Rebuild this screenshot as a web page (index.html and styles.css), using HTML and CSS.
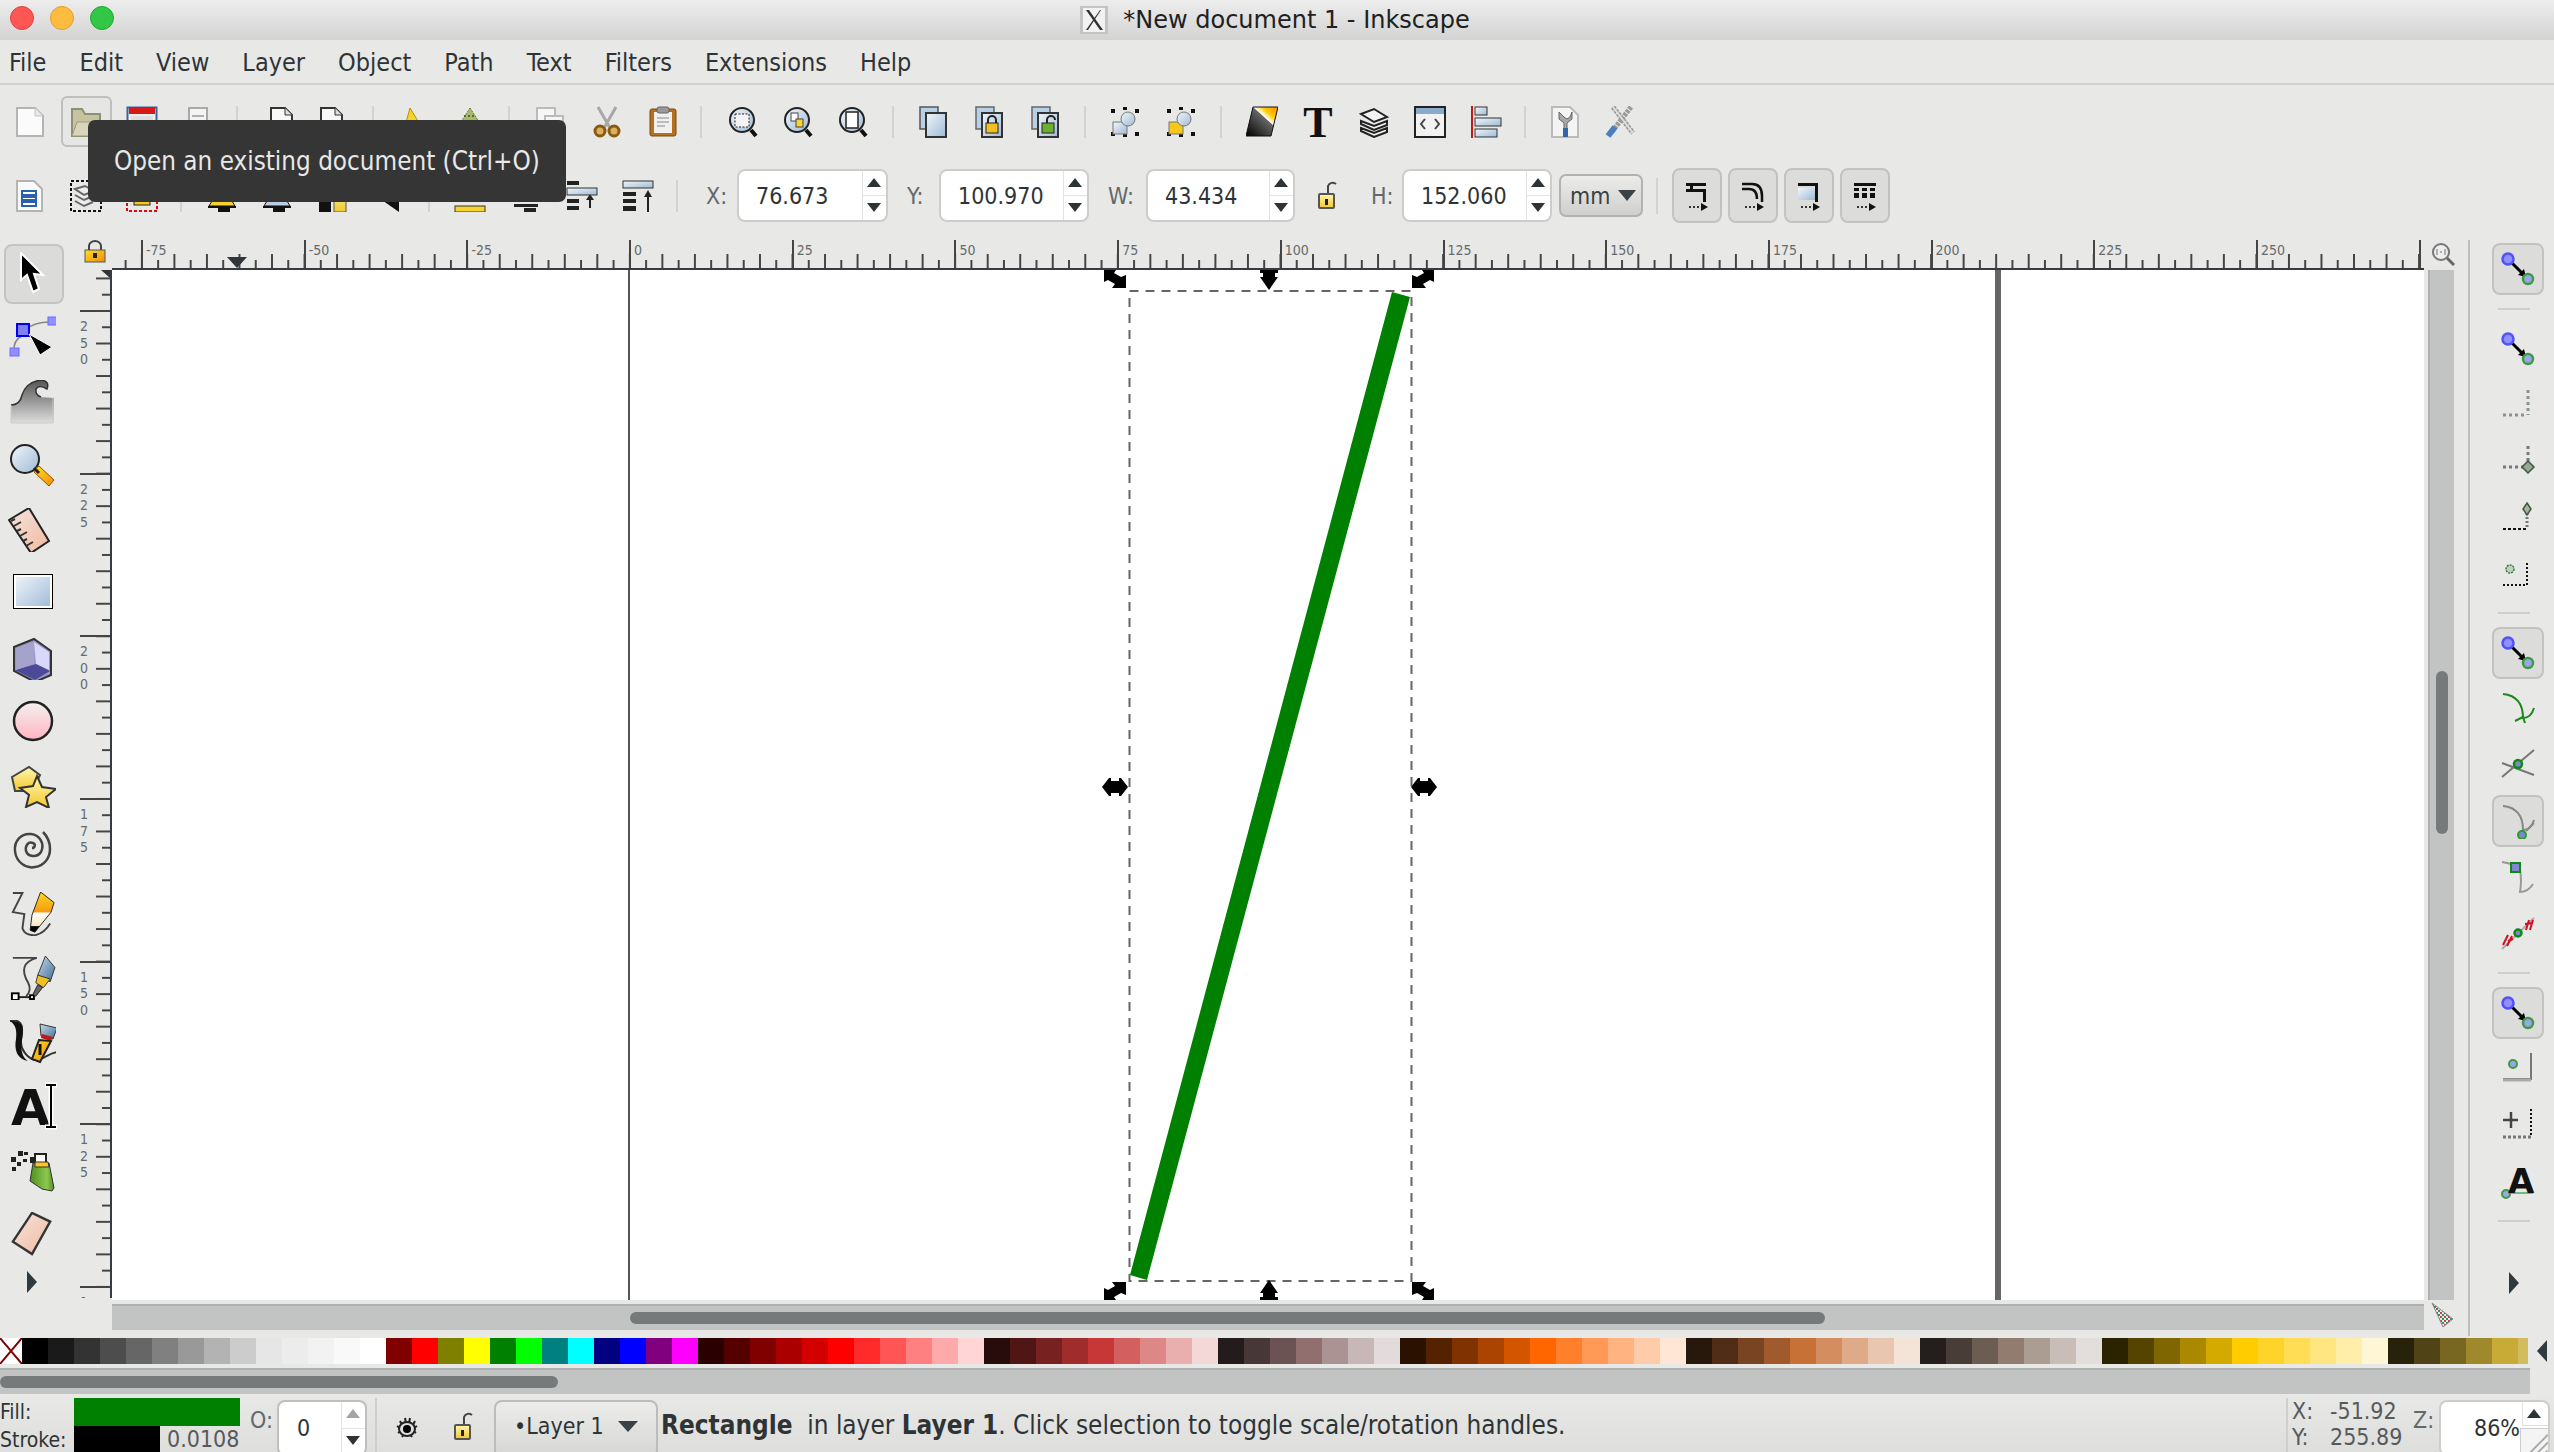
FILE: index.html
```html
<!DOCTYPE html>
<html lang="en">
<head>
<meta charset="utf-8">
<title>*New document 1 - Inkscape</title>
<link rel="stylesheet" href="styles.css">
</head>
<body>
<svg class="defs" aria-hidden="true">
<defs>
<linearGradient id="gBlue" x1="0" y1="0" x2="1" y2="1"><stop offset="0" stop-color="#f2f6fa"/><stop offset="1" stop-color="#9dbad6"/></linearGradient>
<linearGradient id="gPink" x1="0" y1="0" x2="0" y2="1"><stop offset="0" stop-color="#f4f0f0"/><stop offset="1" stop-color="#ffb4c0"/></linearGradient>
<linearGradient id="gPeach" x1="0" y1="0" x2="1" y2="1"><stop offset="0" stop-color="#f4e4dc"/><stop offset="1" stop-color="#f2b9a0"/></linearGradient>
<linearGradient id="gYel" x1="0" y1="0" x2="0" y2="1"><stop offset="0" stop-color="#fff8b0"/><stop offset="1" stop-color="#f3c72c"/></linearGradient>
<linearGradient id="gOrg" x1="0" y1="0" x2="1" y2="1"><stop offset="0" stop-color="#ffe020"/><stop offset="1" stop-color="#f08a10"/></linearGradient>
<linearGradient id="gPencil" x1="0" y1="0" x2="0" y2="1"><stop offset="0" stop-color="#ffd820"/><stop offset=".5" stop-color="#f59a10"/><stop offset=".52" stop-color="#fff"/><stop offset=".85" stop-color="#f8e8c0"/><stop offset=".86" stop-color="#000"/></linearGradient>
<linearGradient id="gGray" x1="0" y1="0" x2="0" y2="1"><stop offset="0" stop-color="#555"/><stop offset="1" stop-color="#ddd"/></linearGradient>
<linearGradient id="gGreen" x1="0" y1="0" x2="1" y2="0"><stop offset="0" stop-color="#4c8f1c"/><stop offset=".7" stop-color="#8cc850"/><stop offset="1" stop-color="#4c8f1c"/></linearGradient>
<linearGradient id="gSteel" x1="0" y1="0" x2="1" y2="1"><stop offset="0" stop-color="#c8dce8"/><stop offset="1" stop-color="#3c6c98"/></linearGradient>
<linearGradient id="gFS" x1="0" y1="1" x2="1" y2="0"><stop offset="0" stop-color="#000"/><stop offset=".6" stop-color="#666"/><stop offset=".62" stop-color="#fff"/><stop offset=".75" stop-color="#fc0"/><stop offset="1" stop-color="#f80"/></linearGradient>
<symbol id="i-new" viewBox="0 0 32 32"><path d="M3 2h18l8 8v20H3z" fill="#fbfbfb" stroke="#b4b4b4" stroke-width="2"/><path d="M21 2v8h8" fill="#e8e8e8" stroke="#c4c4c4"/></symbol>
<symbol id="i-open" viewBox="0 0 32 32"><path d="M2 3h10l3 5h15v22H2z" fill="#c6c3a0" stroke="#8f8f78" stroke-width="2"/><path d="M2 30l5-14h24l-3 14z" fill="#d8d5b8" stroke="#9a9a80"/></symbol>
<symbol id="i-save" viewBox="0 0 32 32"><rect x="1.500" y="1.500" width="29" height="29" fill="#eee" stroke="#3465a4" stroke-width="2"/><rect x="3" y="1" width="26" height="7" fill="#d81818"/><rect x="5" y="10" width="22" height="6" fill="#ddd"/></symbol>
<symbol id="i-saveas" viewBox="0 0 32 32"><rect x="7" y="2" width="18" height="26" fill="#f4f4f4" stroke="#a8a8a8" stroke-width="2"/><path d="M10 10h12M10 15h12M10 20h12" stroke="#b0b0b0" stroke-width="2"/></symbol>
<symbol id="i-imp" viewBox="0 0 32 32"><path d="M6 2h14l7 7v21H6z" fill="#f8f8f8" stroke="#333" stroke-width="2"/><path d="M20 2v7h7" fill="#ddd" stroke="#333"/></symbol>
<symbol id="i-undo" viewBox="0 0 32 32"><path d="M14 2l11 18h-5v8H4v-8h5z" fill="#f6d32d" stroke="#b89000"/></symbol>
<symbol id="i-redo" viewBox="0 0 32 32"><path d="M16 2l13 20H3z" fill="#a8b870" stroke="#6e8030" stroke-dasharray="2 1"/><path d="M6 16h20M10 10h12" stroke="#587020" stroke-dasharray="2 2" stroke-width="2"/></symbol>
<symbol id="i-copy" viewBox="0 0 32 32"><rect x="2" y="2" width="18" height="22" fill="#f6f6f6" stroke="#bbb" stroke-width="2"/><rect x="10" y="10" width="18" height="20" fill="#f4f4f4" stroke="#bbb" stroke-width="2"/></symbol>
<symbol id="i-cut" viewBox="0 0 32 32"><path d="M7 1l12 21M25 1L13 22" stroke="#a8a8a8" stroke-width="3"/><circle cx="9" cy="25" r="5" fill="#d8b060" stroke="#8a5a10" stroke-width="3"/><circle cx="23" cy="25" r="5" fill="#d8b060" stroke="#8a5a10" stroke-width="3"/></symbol>
<symbol id="i-paste" viewBox="0 0 32 32"><rect x="3" y="3" width="26" height="27" rx="2" fill="#b4701c" stroke="#7a4a10"/><rect x="7" y="6" width="18" height="21" fill="#f0f0f0"/><rect x="10" y="1" width="12" height="6" rx="2" fill="#999" stroke="#666"/><path d="M10 12h12M10 16h12M10 20h8" stroke="#aaa" stroke-width="1.500"/></symbol>
<symbol id="i-z1" viewBox="0 0 32 32"><circle cx="15" cy="14" r="12" fill="url(#gBlue)" stroke="#222" stroke-width="2"/><rect x="8" y="8" width="14" height="13" fill="#f4f4f4" stroke="#222" stroke-dasharray="2 1.500"/><path d="M24 24l5 6" stroke="#111" stroke-width="4"/></symbol>
<symbol id="i-z2" viewBox="0 0 32 32"><circle cx="15" cy="14" r="12" fill="url(#gBlue)" stroke="#222" stroke-width="2"/><rect x="9" y="7" width="7" height="8" fill="#fff" stroke="#444"/><rect x="14" y="13" width="7" height="8" fill="#f6d32d" stroke="#444"/><path d="M24 24l5 6" stroke="#111" stroke-width="4"/></symbol>
<symbol id="i-z3" viewBox="0 0 32 32"><circle cx="15" cy="14" r="12" fill="url(#gBlue)" stroke="#222" stroke-width="2"/><rect x="9" y="6" width="12" height="16" fill="#fff" stroke="#222" stroke-width="1.500"/><path d="M24 24l5 6" stroke="#111" stroke-width="4"/></symbol>
<symbol id="i-dup" viewBox="0 0 32 32"><rect x="2" y="1" width="18" height="22" fill="#b8d0e6" stroke="#555" stroke-width="1.500"/><rect x="8" y="7" width="20" height="24" fill="url(#gBlue)" stroke="#333" stroke-width="2"/></symbol>
<symbol id="i-clone" viewBox="0 0 32 32"><rect x="2" y="1" width="18" height="22" fill="#b8d0e6" stroke="#666" stroke-width="1.500"/><rect x="8" y="7" width="20" height="24" fill="url(#gBlue)" stroke="#333" stroke-width="2"/><path d="M14 17v-3a4 4 0 018 0v3" fill="none" stroke="#222" stroke-width="2"/><rect x="12" y="17" width="12" height="10" fill="#f4c020" stroke="#222"/></symbol>
<symbol id="i-unclone" viewBox="0 0 32 32"><rect x="2" y="1" width="18" height="22" fill="#b8d0e6" stroke="#666" stroke-width="1.500"/><rect x="8" y="7" width="20" height="24" fill="url(#gBlue)" stroke="#333" stroke-width="2"/><path d="M17 17v-3a4 4 0 018 0" fill="none" stroke="#222" stroke-width="2"/><rect x="12" y="17" width="12" height="10" fill="#6cb030" stroke="#222"/></symbol>
<symbol id="i-grp" viewBox="0 0 32 32"><path d="M2 3h4v4H2zM26 3h4v4h-4zM2 26h4v4H2zM26 26h4v4h-4zM14 1h4v3h-4zM14 28h4v3h-4z" fill="#111"/><rect x="4" y="16" width="14" height="12" fill="url(#gBlue)" stroke="#777"/><circle cx="19" cy="13" r="7" fill="url(#gBlue)" stroke="#777"/></symbol>
<symbol id="i-ungrp" viewBox="0 0 32 32"><path d="M2 3h4v4H2zM26 3h4v4h-4zM2 26h4v4H2zM26 26h4v4h-4zM14 1h4v3h-4zM14 28h4v3h-4z" fill="#111"/><rect x="4" y="16" width="14" height="12" fill="#f6c81c" stroke="#777"/><circle cx="19" cy="13" r="7" fill="url(#gBlue)" stroke="#777"/></symbol>
<symbol id="i-fs" viewBox="0 0 32 32"><path d="M7 1h25L25 30H0z" fill="url(#gFS)" stroke="#111" stroke-width="1"/></symbol>
<symbol id="i-layers" viewBox="0 0 32 32"><g fill="#f4f4f4" stroke="#222" stroke-width="2"><path d="M3 8l13-5 13 8-13 5z"/><path d="M3 15l0 3 13 6 13-5v-4l-13 5z"/><path d="M3 22v3l13 6 13-5v-4l-13 5z"/></g></symbol>
<symbol id="i-xml" viewBox="0 0 32 32"><rect x="1" y="1" width="30" height="30" fill="#f2f2f2" stroke="#222" stroke-width="2"/><rect x="2" y="2" width="28" height="6" fill="#8aaccc"/><path d="M11 13l-4 5 4 5M21 13l4 5-4 5" fill="none" stroke="#444" stroke-width="2"/></symbol>
<symbol id="i-align" viewBox="0 0 32 32"><path d="M2 0v32" stroke="#c01818" stroke-width="2"/><rect x="5" y="1" width="12" height="8" fill="url(#gBlue)" stroke="#333"/><rect x="5" y="12" width="26" height="8" fill="url(#gBlue)" stroke="#333"/><rect x="5" y="23" width="22" height="8" fill="url(#gBlue)" stroke="#333"/></symbol>
<symbol id="i-pref" viewBox="0 0 32 32"><path d="M3 1h18l8 8v22H3z" fill="#f4f4f4" stroke="#bbb" stroke-width="2"/><path d="M10 6v7l5 4v10h3V17l5-4V6l-2 5-3 2-3-2z" fill="#a8a8a8" stroke="#666"/><rect x="14" y="22" width="5" height="9" fill="#3465a4"/></symbol>
<symbol id="i-tools" viewBox="0 0 32 32"><path d="M8 1l20 26M26 1L6 27" stroke="#999" stroke-width="5" stroke-dasharray="3 1"/><path d="M3 30l7-9" stroke="#4a80c0" stroke-width="6"/><path d="M8 1l20 26" stroke="#ddd" stroke-width="2"/></symbol>
<symbol id="i-seldoc" viewBox="0 0 32 32"><path d="M3 1h17l8 8v22H3z" fill="#fbfbfb" stroke="#b4b4b4" stroke-width="2"/><path d="M8 11h14v4H8zM8 17h14v3H8zM8 22h14v4H8z" fill="#fff" stroke="#2a60b0" stroke-width="2"/></symbol>
<symbol id="i-sellay" viewBox="0 0 32 32"><rect x="1" y="1" width="30" height="30" fill="none" stroke="#111" stroke-width="2" stroke-dasharray="3 2"/><path d="M5 9l10-3 9 5-10 4zM5 15l9 5 9-4M5 21l9 5 9-4" fill="#eee" stroke="#666" stroke-width="2"/></symbol>
<symbol id="i-selred" viewBox="0 0 32 32"><rect x="1" y="1" width="30" height="30" fill="none" stroke="#d01010" stroke-width="2" stroke-dasharray="3 2"/><rect x="8" y="7" width="16" height="18" fill="#f6c81c" stroke="#222"/></symbol>
<symbol id="i-rot" viewBox="0 0 32 32"><path d="M2 26h28v2H2z" fill="#111"/><path d="M16 4l13 22H3z" fill="#f6d32d" stroke="#111"/><rect x="12" y="26" width="12" height="6" fill="#111"/></symbol>
<symbol id="i-rot2" viewBox="0 0 32 32"><path d="M2 26h28v2H2z" fill="#111"/><path d="M16 4l13 22H3z" fill="#b8d0e6" stroke="#111"/><rect x="12" y="26" width="12" height="6" fill="#111"/></symbol>
<symbol id="i-flip" viewBox="0 0 32 32"><rect x="3" y="6" width="12" height="26" fill="#111"/><rect x="18" y="6" width="12" height="26" fill="url(#gYel)" stroke="#555"/></symbol>
<symbol id="i-flip2" viewBox="0 0 32 32"><path d="M8 18l20 0v14z" fill="#111"/></symbol>
<symbol id="i-z-bot" viewBox="0 0 32 32"><rect x="1" y="26" width="30" height="6" fill="#f6d32d" stroke="#333"/></symbol>
<symbol id="i-z-low" viewBox="0 0 32 32"><path d="M4 24h24v3H4zM14 28h12v4H14z" fill="#222"/></symbol>
<symbol id="i-z-up" viewBox="0 0 32 32"><g fill="#222"><rect x="1" y="1" width="12" height="4"/><rect x="1" y="19" width="12" height="4"/><rect x="1" y="26" width="12" height="4"/><path d="M24 14l4 6h-3v8h-2v-8h-3z"/></g><rect x="1" y="8" width="30" height="7" fill="url(#gBlue)" stroke="#333"/></symbol>
<symbol id="i-z-top" viewBox="0 0 32 32"><rect x="1" y="1" width="30" height="7" fill="url(#gBlue)" stroke="#333"/><g fill="#222"><rect x="1" y="12" width="13" height="4"/><rect x="1" y="19" width="13" height="4"/><rect x="1" y="26" width="13" height="5"/><path d="M26 10l4 7h-3v15h-2V17h-3z"/></g></symbol>
<symbol id="i-lock" viewBox="0 0 22 32"><path d="M12 14V6a5 5 0 0 1 8-2" fill="none" stroke="#444" stroke-width="2"/><rect x="3" y="14" width="15" height="14" rx="1" fill="url(#gYel)" stroke="#555" stroke-width="2"/><rect x="9" y="19" width="3" height="6" fill="#222"/></symbol>
<symbol id="i-lockc" viewBox="0 0 22 24"><path d="M5 11V6a6 5 0 0 1 12 0v5" fill="none" stroke="#444" stroke-width="2"/><rect x="1" y="10" width="20" height="12" fill="url(#gOrg)" stroke="#555"/><rect x="9" y="13" width="4" height="5" fill="#222"/></symbol>
<symbol id="m-a" viewBox="0 0 24 32"><path d="M1 3h20v3H8v3h13v13h-3V12H1V9h4V6H1z" fill="#111"/><path d="M4 27h12" stroke="#333" stroke-width="2" stroke-dasharray="2 2"/><path d="M16 23l7 4-7 4z" fill="#111"/></symbol>
<symbol id="m-b" viewBox="0 0 24 32"><path d="M1 4h10q10 0 10 12v6M1 9h7q8 0 8 10" fill="none" stroke="#111" stroke-width="2.500"/><path d="M4 27h12" stroke="#333" stroke-width="2" stroke-dasharray="2 2"/><path d="M16 23l7 4-7 4z" fill="#111"/></symbol>
<symbol id="m-c" viewBox="0 0 24 32"><rect x="1" y="8" width="17" height="12" fill="url(#gBlue)"/><path d="M1 3h20v3H1zM18 6h3v16h-3z" fill="#111"/><path d="M4 27h12" stroke="#333" stroke-width="2" stroke-dasharray="2 2"/><path d="M16 23l7 4-7 4z" fill="#111"/></symbol>
<symbol id="m-d" viewBox="0 0 24 32"><path d="M1 3h22v3H1zM1 8h5v3H1zM9 8h5v3H9zM17 8h5v3h-5zM1 13h5v5H1zM9 13h5v5H9zM17 13h5v5h-5z" fill="#111"/><path d="M4 27h12" stroke="#333" stroke-width="2" stroke-dasharray="2 2"/><path d="M16 23l7 4-7 4z" fill="#111"/></symbol>
<symbol id="t-sel" viewBox="0 0 48 44"><path d="M13 1v27l6-5 6 17 6-3-5-15 9 1z" fill="#000" stroke="#fff" stroke-width="2"/></symbol>
<symbol id="t-node" viewBox="0 0 48 44"><path d="M16 14Q28 5 45 6M14 20Q5 24 6 36" fill="none" stroke="#888" stroke-width="1.500"/><rect x="9" y="8" width="12" height="12" fill="#8080f0" stroke="#0000f0" stroke-width="2"/><rect x="40" y="1" width="9" height="8" fill="#9090ff" stroke="#6a6aff"/><rect x="2" y="32" width="9" height="8" fill="#9090ff" stroke="#6a6aff"/><path d="M21 18l23 13-12 8z" fill="#000" stroke="#fff"/></symbol>
<symbol id="t-tweak" viewBox="0 0 48 44"><path d="M3 25q9 0 11-10 4-13 19-15 9 1 6 9-6-5-10-1-3 6 2 9l15 1V43H3z" fill="url(#gGray)"/><path d="M3 25q9 0 11-10 4-13 19-15 9 1 6 9-8-5-11 0-1 6 5 8" fill="none" stroke="#333" stroke-width="1.500"/><path d="M3 25V43H45V18" fill="none" stroke="#ccc"/></symbol>
<symbol id="t-zoom" viewBox="0 0 48 44"><circle cx="17" cy="15" r="14" fill="url(#gBlue)" stroke="#222" stroke-width="2"/><path d="M27 25l4-3 15 14-5 6-15-14z" fill="url(#gOrg)" stroke="#a04c00" stroke-width="1"/><path d="M26 24l5 5" stroke="#222" stroke-width="3"/></symbol>
<symbol id="t-meas" viewBox="0 0 48 44"><path d="M1 12L21 0l20 33-18 12z" fill="url(#gPeach)" stroke="#222" stroke-width="2"/><path d="M3 13l4-2M6 18l7-4M9 23l4-2M12 28l7-4M15 33l4-2M18 38l7-4" stroke="#333" stroke-width="2"/></symbol>
<symbol id="t-rect" viewBox="0 0 48 44"><rect x="6" y="3" width="38" height="33" fill="url(#gBlue)" stroke="#000" stroke-width="2"/><rect x="7" y="4" width="36" height="31" fill="none" stroke="#fff" stroke-width="2"/></symbol>
<symbol id="t-box" viewBox="0 0 48 44"><path d="M6 11L26 3l17 12v24l-16 7-21-11z" fill="#9a98c8" stroke="#333" stroke-width="2"/><path d="M26 6l15 10v18l-13-6z" fill="#d8d8fa"/><path d="M7 34l21-6 14 7-15 9z" fill="#4a4a98"/><path d="M8 12l18-6v22L8 34z" fill="#a5a3cc"/></symbol>
<symbol id="t-circ" viewBox="0 0 48 44"><ellipse cx="25" cy="21" rx="19" ry="19" fill="url(#gPink)" stroke="#222" stroke-width="2.500"/></symbol>
<symbol id="t-star" viewBox="0 0 48 44"><path d="M4 13L21 3l11 8-8 16H7z" fill="url(#gYel)" stroke="#444" stroke-width="2"/><path d="M29 12l5 11 14 2-10 8 3 11-12-6-11 5 3-12-9-7 13-2z" fill="url(#gYel)" stroke="#333" stroke-width="2"/></symbol>
<symbol id="t-spiral" viewBox="0 0 48 44"><path d="M24 20c3 0 4-4 1-5-5-2-8 3-7 8 2 6 11 7 15 1 4-8-1-17-10-18C13 5 6 13 7 23c1 11 11 18 20 16 9-1 15-9 15-18 0-7-3-13-7-17" fill="none" stroke="#444" stroke-width="2.500"/></symbol>
<symbol id="t-pencil" viewBox="0 0 48 46"><path d="M4 1h10L4 21l12 2-2 15q3 8 14 7 9-2 15-12" fill="none" stroke="#444" stroke-width="2"/><path d="M33 0l14 11-3 10-17 21-5-2 2-16z" fill="url(#gPencil)" stroke="#222"/></symbol>
<symbol id="t-pen" viewBox="0 0 48 46"><path d="M4 2h25Q8 8 20 28q4 8-2 14" fill="none" stroke="#444" stroke-width="2"/><path d="M9 43h14" stroke="#222" stroke-width="2"/><rect x="3" y="39" width="7" height="7" fill="#fff" stroke="#000" stroke-width="2"/><rect x="22" y="41" width="4" height="4" fill="#fff" stroke="#000" stroke-width="2"/><path d="M38 0l10 12-5 15-13-7z" fill="url(#gSteel)" stroke="#333"/><path d="M30 20l13 4-7 9-8-5z" fill="#f0c020" stroke="#333"/><path d="M30 30l5 3-7 9-3-2z" fill="#666" stroke="#222"/></symbol>
<symbol id="t-call" viewBox="0 0 48 44"><path d="M2 1c16-3 12 12 11 19-1 9 6 18 14 20 9 0 13-7 22-8" fill="none" stroke="#333" stroke-width="2"/><path d="M2 1c16-1 13 11 12 19-2 11 1 18 6 21-11-2-14-11-12-22C9 11 8 5 2 1z" fill="#111"/><path d="M32 4l17 4-4 11-12-3z" fill="url(#gSteel)" stroke="#333"/><path d="M34 14l11 3-2 4-10-3z" fill="#c01818"/><path d="M31 20l12 1-11 21-8-3z" fill="url(#gOrg)" stroke="#222" stroke-width="2"/><path d="M32 24v11" stroke="#111" stroke-width="3"/></symbol>
<symbol id="t-spray" viewBox="0 0 48 44"><path d="M3 9h5v5H3zM10 3h5v5h-5zM9 14h4v4H9zM4 19h4v4H4zM15 11h4v3h-4zM16 4h4v3h-4zM22 9h4v6h-4z" fill="#222"/><rect x="27" y="6" width="11" height="9" fill="#fff" stroke="#222" stroke-width="2"/><path d="M25 15l16 0 5 25-2 3-10-2-12-8z" fill="url(#gGreen)" stroke="#333"/><path d="M27 14h13l1 5H27z" fill="#f8c820" stroke="#333"/></symbol>
<symbol id="t-erase" viewBox="0 0 48 46"><path d="M4 31L24 1 43 10 24 44z" fill="url(#gPeach)" stroke="#333" stroke-width="2.500"/></symbol>
<symbol id="s-main" viewBox="0 0 36 36"><path d="M11 11l14 14" stroke="#000" stroke-width="3"/><path d="M26 26l-8-2 6-6z" fill="#000"/><circle cx="8" cy="8" r="5.500" fill="#8f8fff" stroke="#5050ff" stroke-width="2.500"/><circle cx="28" cy="28" r="5" fill="#9aa6e8" stroke="#3f9a47" stroke-width="2.500"/></symbol>
<symbol id="s-bbox" viewBox="0 0 36 36"><path d="M3 28h22M28 3v25" stroke="#8a958a" stroke-width="3" stroke-dasharray="3 3"/></symbol>
<symbol id="s-edge" viewBox="0 0 36 36"><path d="M3 24h20M28 3v18M28 28v0" stroke="#777" stroke-width="3" stroke-dasharray="3 3"/><path d="M28 18l6 6-6 6-6-6z" fill="#9aa69a" stroke="#3a5a3a" stroke-width="1.500"/></symbol>
<symbol id="s-corner" viewBox="0 0 36 36"><path d="M3 30h24" stroke="#111" stroke-width="2" stroke-dasharray="3 2"/><path d="M27 14v16" stroke="#777" stroke-width="3" stroke-dasharray="2 2"/><path d="M27 4l4 6-4 6-4-6z" fill="#aab0aa" stroke="#3a5a3a" stroke-width="1.500"/></symbol>
<symbol id="s-center" viewBox="0 0 36 36"><path d="M3 30h24M27 30V6" stroke="#111" stroke-width="2" stroke-dasharray="2 2"/><circle cx="10" cy="14" r="4" fill="#c0d0c0" stroke="#3a7a3a" stroke-width="1.500" stroke-dasharray="2 1"/></symbol>
<symbol id="s-path" viewBox="0 0 36 36"><path d="M3 3q20 2 20 24q8 0 11-10" fill="none" stroke="#1a8a1a" stroke-width="2"/><path d="M15 30l8-4 2 6" fill="none" stroke="#1a8a1a" stroke-width="2"/></symbol>
<symbol id="s-cross" viewBox="0 0 36 36"><path d="M2 30L34 3M2 16l32 12" stroke="#777" stroke-width="2"/><circle cx="18" cy="17" r="4" fill="#8088d0" stroke="#0e8a14" stroke-width="2.500"/></symbol>
<symbol id="s-norm" viewBox="0 0 36 36"><path d="M3 3q20 2 20 24q8 0 11-10" fill="none" stroke="#888" stroke-width="2"/><circle cx="22" cy="32" r="4" fill="#8088d0" stroke="#2a9a32" stroke-width="2"/><path d="M26 28l8-8" stroke="#888" stroke-width="2"/></symbol>
<symbol id="s-cusp" viewBox="0 0 36 36"><path d="M2 3q14 2 18 8q2 10 0 22q8 0 13-8" fill="none" stroke="#999" stroke-width="2"/><rect x="11" y="4" width="9" height="9" fill="#8088d0" stroke="#0e8a14" stroke-width="2"/></symbol>
<symbol id="s-smooth" viewBox="0 0 36 36"><path d="M2 34L34 3" stroke="#aaa" stroke-width="2"/><circle cx="18" cy="18" r="3.500" fill="#8088d0" stroke="#0e8a14" stroke-width="2.500"/><path d="M3 30l5-10M7 31l5-10M8 26l5-2M26 15l3-10M30 15l3-10M25 9l8-1" stroke="#d01020" stroke-width="2"/></symbol>
<symbol id="s-midc" viewBox="0 0 36 36"><path d="M31 2v26H3" fill="none" stroke="#777" stroke-width="2"/><path d="M3 29h28" stroke="#aaa" stroke-width="3"/><circle cx="13" cy="13" r="4" fill="#9aa6e8" stroke="#3f9a47" stroke-width="2"/></symbol>
<symbol id="s-rot" viewBox="0 0 36 36"><path d="M31 2v28" stroke="#111" stroke-width="2" stroke-dasharray="2 2"/><path d="M3 30h28" stroke="#777" stroke-width="3" stroke-dasharray="3 2"/><path d="M3 13h15M11 5v16" stroke="#444" stroke-width="2.500"/></symbol>
<symbol id="s-text" viewBox="0 0 36 36"><rect x="5" y="29" width="28" height="2" fill="#77b877"/><circle cx="6" cy="31" r="4" fill="#9aa6e8" stroke="#3f9a47" stroke-width="2"/></symbol>
</defs>
</svg>

<div class="window">
  <header class="titlebar">
    <span class="lights"><i class="light red"></i><i class="light amber"></i><i class="light green"></i></span>
    <span class="title"><svg class="xicon" viewBox="0 0 28 28"><rect width="28" height="28" fill="#c4c4c4"/><rect x="3" y="2" width="22" height="24" fill="#f2f2f2"/><path d="M6 4l14 20h3L9 4zM20 4l-14 20h2L21 4z" fill="#333"/></svg>*New document 1 - Inkscape</span>
  </header>

  <nav class="menubar">
    <span>File</span><span>Edit</span><span>View</span><span>Layer</span><span>Object</span><span>Path</span><span>Text</span><span>Filters</span><span>Extensions</span><span>Help</span>
  </nav>

  <div class="toolbar one">
    <div class="group w56">
      <span class="tb"><svg class="ic"><use href="#i-new"/></svg></span>
      <span class="tb hover"><svg class="ic"><use href="#i-open"/></svg></span>
      <span class="tb"><svg class="ic"><use href="#i-save"/></svg></span>
      <span class="tb"><svg class="ic"><use href="#i-saveas"/></svg></span>
    </div>
    <i class="sep a1"></i>
    <div class="group w50">
      <span class="tb"><svg class="ic"><use href="#i-imp"/></svg></span>
      <span class="tb"><svg class="ic"><use href="#i-imp"/></svg></span>
    </div>
    <i class="sep a2"></i>
    <div class="group w58">
      <span class="tb"><svg class="ic"><use href="#i-undo"/></svg></span>
      <span class="tb"><svg class="ic"><use href="#i-redo"/></svg></span>
    </div>
    <i class="sep a3"></i>
    <div class="group w56">
      <span class="tb"><svg class="ic"><use href="#i-copy"/></svg></span>
      <span class="tb"><svg class="ic"><use href="#i-cut"/></svg></span>
      <span class="tb"><svg class="ic"><use href="#i-paste"/></svg></span>
    </div>
    <i class="sep a3"></i>
    <div class="group w55">
      <span class="tb"><svg class="ic"><use href="#i-z1"/></svg></span>
      <span class="tb"><svg class="ic"><use href="#i-z2"/></svg></span>
      <span class="tb"><svg class="ic"><use href="#i-z3"/></svg></span>
    </div>
    <i class="sep a4"></i>
    <div class="group w56">
      <span class="tb"><svg class="ic"><use href="#i-dup"/></svg></span>
      <span class="tb"><svg class="ic"><use href="#i-clone"/></svg></span>
      <span class="tb"><svg class="ic"><use href="#i-unclone"/></svg></span>
    </div>
    <i class="sep a5"></i>
    <div class="group w56">
      <span class="tb"><svg class="ic"><use href="#i-grp"/></svg></span>
      <span class="tb"><svg class="ic"><use href="#i-ungrp"/></svg></span>
    </div>
    <i class="sep a6"></i>
    <div class="group w56">
      <span class="tb"><svg class="ic"><use href="#i-fs"/></svg></span>
      <span class="tb"><svg class="ic ov"><text class="bigt" x="16" y="31" text-anchor="middle">T</text></svg></span>
      <span class="tb"><svg class="ic"><use href="#i-layers"/></svg></span>
      <span class="tb"><svg class="ic"><use href="#i-xml"/></svg></span>
      <span class="tb"><svg class="ic"><use href="#i-align"/></svg></span>
    </div>
    <i class="sep a5"></i>
    <div class="group w56">
      <span class="tb"><svg class="ic"><use href="#i-pref"/></svg></span>
      <span class="tb"><svg class="ic"><use href="#i-tools"/></svg></span>
    </div>
  </div>

  <div class="toolbar two">
    <div class="group w56">
      <span class="tb"><svg class="ic"><use href="#i-seldoc"/></svg></span>
      <span class="tb"><svg class="ic"><use href="#i-sellay"/></svg></span>
      <span class="tb"><svg class="ic"><use href="#i-selred"/></svg></span>
    </div>
    <i class="sep b1"></i>
    <div class="group w55">
      <span class="tb"><svg class="ic"><use href="#i-rot"/></svg></span>
      <span class="tb"><svg class="ic"><use href="#i-rot2"/></svg></span>
      <span class="tb"><svg class="ic"><use href="#i-flip"/></svg></span>
      <span class="tb"><svg class="ic"><use href="#i-flip2"/></svg></span>
    </div>
    <i class="sep b2"></i>
    <div class="group w56">
      <span class="tb"><svg class="ic"><use href="#i-z-bot"/></svg></span>
      <span class="tb"><svg class="ic"><use href="#i-z-low"/></svg></span>
      <span class="tb"><svg class="ic"><use href="#i-z-up"/></svg></span>
      <span class="tb"><svg class="ic"><use href="#i-z-top"/></svg></span>
    </div>
    <i class="sep b3"></i>
    <label class="lab lx">X:</label>
    <span class="spin s151"><span class="val">76.673</span><span class="step"><i class="up"></i><i class="dn"></i></span></span>
    <label class="lab ly">Y:</label>
    <span class="spin s150"><span class="val">100.970</span><span class="step"><i class="up"></i><i class="dn"></i></span></span>
    <label class="lab lw">W:</label>
    <span class="spin s149"><span class="val">43.434</span><span class="step"><i class="up"></i><i class="dn"></i></span></span>
    <span class="lockslot"><svg class="lockic"><use href="#i-lock"/></svg></span>
    <label class="lab lh">H:</label>
    <span class="spin s150"><span class="val">152.060</span><span class="step"><i class="up"></i><i class="dn"></i></span></span>
    <span class="unit">mm<i class="caret"></i></span>
    <i class="sep b4"></i>
    <span class="toggle first"><svg class="mic"><use href="#m-a"/></svg></span>
    <span class="toggle"><svg class="mic"><use href="#m-b"/></svg></span>
    <span class="toggle"><svg class="mic"><use href="#m-c"/></svg></span>
    <span class="toggle"><svg class="mic"><use href="#m-d"/></svg></span>
  </div>

  <div class="tooltip">Open an existing document (Ctrl+O)</div>

  <main class="main">
    <aside class="toolbox">
      <span class="tool active"><svg class="tic"><use href="#t-sel"/></svg></span>
      <span class="tool"><svg class="tic"><use href="#t-node"/></svg></span>
      <span class="tool"><svg class="tic"><use href="#t-tweak"/></svg></span>
      <span class="tool"><svg class="tic"><use href="#t-zoom"/></svg></span>
      <span class="tool"><svg class="tic"><use href="#t-meas"/></svg></span>
      <span class="tool"><svg class="tic"><use href="#t-rect"/></svg></span>
      <span class="tool"><svg class="tic"><use href="#t-box"/></svg></span>
      <span class="tool"><svg class="tic"><use href="#t-circ"/></svg></span>
      <span class="tool"><svg class="tic"><use href="#t-star"/></svg></span>
      <span class="tool"><svg class="tic"><use href="#t-spiral"/></svg></span>
      <span class="tool"><svg class="tic"><use href="#t-pencil"/></svg></span>
      <span class="tool"><svg class="tic"><use href="#t-pen"/></svg></span>
      <span class="tool"><svg class="tic"><use href="#t-call"/></svg></span>
      <span class="tool"><svg class="tic"><text class="biga" x="3" y="41">A</text><path d="M37 1h12M37 43h12M43 1v42" stroke="#fff" stroke-width="5"/><path d="M38 1h10M38 43h10M43 1v42" stroke="#000" stroke-width="2"/></svg></span>
      <span class="tool"><svg class="tic"><use href="#t-spray"/></svg></span>
      <span class="tool"><svg class="tic"><use href="#t-erase"/></svg></span>
      <span class="more"><i class="arrow-r"></i></span>
    </aside>

    <section class="workspace">
      <div class="corner"><svg class="cornerlock"><use href="#i-lockc"/></svg></div>
      <div class="hruler">
        <span class="hmark"></span>
        <span class="hcell"><b>-75</b></span><span class="hcell"><b>-50</b></span><span class="hcell"><b>-25</b></span><span class="hcell"><b>0</b></span><span class="hcell"><b>25</b></span><span class="hcell"><b>50</b></span><span class="hcell"><b>75</b></span><span class="hcell"><b>100</b></span><span class="hcell"><b>125</b></span><span class="hcell"><b>150</b></span><span class="hcell"><b>175</b></span><span class="hcell"><b>200</b></span><span class="hcell"><b>225</b></span><span class="hcell"><b>250</b></span><span class="hcell"></span>
      </div>
      <div class="zoomfit"><svg class="fitic" viewBox="0 0 24 24"><circle cx="10" cy="10" r="8" fill="#eee" stroke="#777" stroke-width="2"/><path d="M6 7v6M14 7v6M9 10h2" stroke="#999" stroke-width="1.500"/><path d="M16 16l7 7" stroke="#666" stroke-width="3"/></svg></div>
      <div class="vruler">
        <span class="vcell"></span><span class="vcell"><b>250</b></span><span class="vcell"><b>225</b></span><span class="vcell"><b>200</b></span><span class="vcell"><b>175</b></span><span class="vcell"><b>150</b></span><span class="vcell"><b>125</b></span><span class="vcell"><b>1</b></span>
        <i class="vmark"></i>
      </div>
      <div class="canvas">
        <svg class="art" viewBox="0 0 2312 1030">
          <path d="M517 0v1030" stroke="#555" stroke-width="2"/>
          <path d="M1886 0v1030" stroke="#666" stroke-width="6"/>
          <rect x="1017.500" y="21" width="282" height="990" fill="none" stroke="#666" stroke-width="2" stroke-dasharray="9 7"/>
          <path d="M1280 22l18 5-263 983-17-5z" fill="#008000"/>
          <g fill="#000">
            <path d="M0 0H12L10 3 17 7 22 5V18H8L11 14 4 10 0 12Z" transform="translate(992 0)"/>
            <path d="M0 0H12L10 3 17 7 22 5V18H8L11 14 4 10 0 12Z" transform="translate(1322 0) scale(-1 1)"/>
            <path d="M0 0H12L10 3 17 7 22 5V18H8L11 14 4 10 0 12Z" transform="translate(992 1030) scale(1 -1)"/>
            <path d="M0 0H12L10 3 17 7 22 5V18H8L11 14 4 10 0 12Z" transform="translate(1322 1030) scale(-1 -1)"/>
            <path d="M-9-10H9V-7H6V-3H9L0 10-9-3H-6V-7H-9Z" transform="translate(1157 10)"/>
            <path d="M-9-10H9V-7H6V-3H9L0 10-9-3H-6V-7H-9Z" transform="translate(1157 1020) scale(1 -1)"/>
            <path d="M-13 0-6-9H-4V-6H4V-9H6L13 0 6 9H4V6H-4V9H-6Z" transform="translate(1003 517)"/>
            <path d="M-13 0-6-9H-4V-6H4V-9H6L13 0 6 9H4V6H-4V9H-6Z" transform="translate(1312 517)"/>
          </g>
        </svg>
      </div>
      <div class="vscroll"><i class="vthumb"></i></div>
      <div class="hscroll"><i class="hthumb"></i></div>
      <div class="cms"><svg class="cmsic" viewBox="0 0 24 26"><defs><pattern id="chk" width="4" height="4" patternUnits="userSpaceOnUse"><rect width="2" height="2" fill="#2a9a4a"/><rect x="2" y="2" width="2" height="2" fill="#c04060"/></pattern></defs><path d="M2 1l21 16-10 8z" fill="url(#chk)" stroke="#889"/></svg></div>
    </section>

    <aside class="snapbar">
      <span class="snap on"><svg class="sic"><use href="#s-main"/></svg></span>
      <i class="hsep"></i>
      <span class="snap"><svg class="sic"><use href="#s-main"/></svg></span>
      <span class="snap"><svg class="sic"><use href="#s-bbox"/></svg></span>
      <span class="snap"><svg class="sic"><use href="#s-edge"/></svg></span>
      <span class="snap"><svg class="sic"><use href="#s-corner"/></svg></span>
      <span class="snap"><svg class="sic"><use href="#s-center"/></svg></span>
      <i class="hsep"></i>
      <span class="snap on"><svg class="sic"><use href="#s-main"/></svg></span>
      <span class="snap"><svg class="sic"><use href="#s-path"/></svg></span>
      <span class="snap"><svg class="sic"><use href="#s-cross"/></svg></span>
      <span class="snap on"><svg class="sic"><use href="#s-norm"/></svg></span>
      <span class="snap"><svg class="sic"><use href="#s-cusp"/></svg></span>
      <span class="snap"><svg class="sic"><use href="#s-smooth"/></svg></span>
      <i class="hsep"></i>
      <span class="snap on"><svg class="sic"><use href="#s-main"/></svg></span>
      <span class="snap"><svg class="sic"><use href="#s-midc"/></svg></span>
      <span class="snap"><svg class="sic"><use href="#s-rot"/></svg></span>
      <span class="snap"><svg class="sic"><use href="#s-text"/><text class="snapa" x="8" y="30">A</text></svg></span>
      <i class="hsep"></i>
      <span class="more end"><i class="arrow-r"></i></span>
    </aside>
  </main>

  <div class="palette">
    <span class="none"><svg class="noneic" viewBox="0 0 22 26"><path d="M0 0l22 26M22 0L0 26" stroke="#800000" stroke-width="2"/></svg></span>
    <div class="swatches">
      <i style="background:#000"></i><i style="background:#1a1a1a"></i><i style="background:#333"></i><i style="background:#4d4d4d"></i><i style="background:#666"></i><i style="background:#808080"></i><i style="background:#999"></i><i style="background:#b3b3b3"></i><i style="background:#ccc"></i><i style="background:#e6e6e6"></i><i style="background:#ececec"></i><i style="background:#f2f2f2"></i><i style="background:#f9f9f9"></i><i style="background:#fff"></i>
      <i style="background:#800000"></i><i style="background:#f00"></i><i style="background:#808000"></i><i style="background:#ff0"></i><i style="background:#008000"></i><i style="background:#0f0"></i><i style="background:#008080"></i><i style="background:#0ff"></i><i style="background:#000080"></i><i style="background:#00f"></i><i style="background:#800080"></i><i style="background:#f0f"></i>
      <i style="background:#2b0000"></i><i style="background:#500"></i><i style="background:#800000"></i><i style="background:#a00"></i><i style="background:#d40000"></i><i style="background:#f00"></i><i style="background:#ff2a2a"></i><i style="background:#f55"></i><i style="background:#ff8080"></i><i style="background:#faa"></i><i style="background:#ffd5d5"></i>
      <i style="background:#280b0b"></i><i style="background:#501616"></i><i style="background:#782121"></i><i style="background:#a02c2c"></i><i style="background:#c83737"></i><i style="background:#d35f5f"></i><i style="background:#de8787"></i><i style="background:#e9afaf"></i><i style="background:#f4d7d7"></i>
      <i style="background:#241c1c"></i><i style="background:#483737"></i><i style="background:#6c5353"></i><i style="background:#916f6f"></i><i style="background:#ac9393"></i><i style="background:#c8b7b7"></i><i style="background:#e3dbdb"></i>
      <i style="background:#2b1100"></i><i style="background:#520"></i><i style="background:#803300"></i><i style="background:#a40"></i><i style="background:#d45500"></i><i style="background:#f60"></i><i style="background:#ff7f2a"></i><i style="background:#f95"></i><i style="background:#ffb380"></i><i style="background:#fca"></i><i style="background:#ffe6d5"></i>
      <i style="background:#28170b"></i><i style="background:#502d16"></i><i style="background:#784421"></i><i style="background:#a05a2c"></i><i style="background:#c87137"></i><i style="background:#d38d5f"></i><i style="background:#deaa87"></i><i style="background:#e9c6af"></i><i style="background:#f4e3d7"></i>
      <i style="background:#241f1c"></i><i style="background:#483e37"></i><i style="background:#6c5d53"></i><i style="background:#917c6f"></i><i style="background:#ac9d93"></i><i style="background:#c8beb7"></i><i style="background:#e3dedb"></i>
      <i style="background:#2b2200"></i><i style="background:#540"></i><i style="background:#806600"></i><i style="background:#a80"></i><i style="background:#d4aa00"></i><i style="background:#fc0"></i><i style="background:#ffd42a"></i><i style="background:#fd5"></i><i style="background:#ffe680"></i><i style="background:#fea"></i><i style="background:#fff6d5"></i>
      <i style="background:#28220b"></i><i style="background:#504416"></i><i style="background:#786721"></i><i style="background:#a0892c"></i><i style="background:#c8ab37"></i><i style="background:#d3bc5f"></i>
    </div>
    <i class="arrow-l"></i>
  </div>
  <div class="palscroll"><i class="palthumb"></i></div>

  <footer class="status">
    <div class="style">
      <span class="slab">Fill:</span><span class="fillsw"></span>
      <span class="slab">Stroke:</span><span class="strokerow"><i class="strokesw"></i><span class="sw">0.0108</span></span>
    </div>
    <label class="lab lo">O:</label>
    <span class="spin opac"><span class="val">0</span><span class="step"><i class="up off"></i><i class="dn"></i></span></span>
    <i class="vsep"></i>
    <svg class="eye" viewBox="0 0 24 24"><path d="M5 6l2 4M10 3l1 5M15 3l-1 5M20 6l-2 4M2 11l3 2M22 11l-3 2M3 18l3-2M21 18l-3-2M7 22l2-3M17 22l-2-3" stroke="#222" stroke-width="2"/><ellipse cx="12" cy="14" rx="8" ry="7" fill="#ddd" stroke="#222" stroke-width="2"/><circle cx="12" cy="14" r="4" fill="#000"/></svg>
    <svg class="padlock"><use href="#i-lock"/></svg>
    <span class="layerbtn"><span>•Layer 1</span><i class="caret big"></i></span>
    <span class="msg"><b>Rectangle</b>  in layer <b>Layer 1</b>. Click selection to toggle scale/rotation handles.</span>
    <i class="vsep right"></i>
    <div class="coords">
      <span>X:</span><span class="num">-51.92</span>
      <span>Y:</span><span class="num">255.89</span>
    </div>
    <label class="lab lz">Z:</label>
    <span class="spin zoomsp"><span class="val">86%</span><span class="step"><i class="up"></i></span><svg class="grip" viewBox="0 0 28 26"><path d="M8 26L28 6M16 26L28 14M24 26l4-4" stroke="#aaa" stroke-width="2"/></svg></span>
  </footer>
</div>
</body>
</html>
```

FILE: styles.css
```css
* { box-sizing: border-box; }
html, body { margin: 0; padding: 0; background: #e8e8e7; }
body { font-family: "DejaVu Sans Condensed", "DejaVu Sans", sans-serif; color: #2e3436; }
i { display: block; font-style: normal; }
.defs { position: absolute; width: 0; height: 0; }
.window { width: 2554px; height: 1452px; position: relative; overflow: hidden; display: flex; flex-direction: column; background: #e8e8e7; }

/* title bar */
.titlebar { height: 40px; flex: none; background: linear-gradient(#ededed, #d3d3d3); display: flex; align-items: center; justify-content: center; position: relative; }
.lights { position: absolute; left: 10px; top: 6px; display: flex; gap: 16px; }
.light { width: 24px; height: 24px; border-radius: 50%; }
.red { background: #fc5753; border: 1px solid #e0443e; }
.amber { background: #fdbc40; border: 1px solid #dea123; }
.green { background: #33c748; border: 1px solid #1dad2b; }
.title { font-family: "DejaVu Sans", sans-serif; font-size: 24px; color: #202020; display: flex; align-items: center; gap: 15px; margin-right: 4px; }
.xicon { width: 28px; height: 28px; }

/* menu */
.menubar { height: 45px; flex: none; display: flex; align-items: center; gap: 33px; padding: 2px 0 0 9px; border-bottom: 2px solid #d2d2d0; font-size: 25px; }

/* toolbars */
.toolbar { flex: none; display: flex; align-items: center; padding-left: 2px; }
.toolbar.one { height: 80px; padding-top: 11px; padding-bottom: 18px; }
.toolbar.two { height: 75px; padding-top: 3px; padding-bottom: 17px; }
.group { display: flex; align-items: center; }
.tb { display: flex; align-items: center; justify-content: center; height: 51px; flex: none; }
.w56 .tb { width: 56px; }
.w50 .tb { width: 50px; }
.w58 .tb { width: 58px; }
.w55 .tb { width: 55px; }
.tb.hover { width: 51px; margin: 0 2.5px; background: #e6e6e5; border: 2px solid #bfbfbd; border-radius: 6px; }
.ic { width: 32px; height: 32px; }
.ic.ov { overflow: visible; }
.bigt { font-family: "Liberation Serif", serif; font-weight: 700; font-size: 44px; fill: #111; }
.sep { width: 2px; height: 32px; background: #d2d2d0; flex: none; }
.sep.a1 { margin: 0 18px 0 10px; }
.sep.a2 { margin: 0 9px 0 16px; }
.sep.a3 { margin: 0 13px 0 9px; }
.sep.a4 { margin: 0 12px 0 12px; }
.sep.a5 { margin: 0 11px 0 10px; }
.sep.a6 { margin: 0 12px 0 11px; }
.sep.b1 { margin: 0 12px 0 10px; }
.sep.b2 { margin: 0 12px 0 14px; }
.sep.b3 { margin: 0 28px 0 10px; }
.sep.b4 { margin: 0 14px 0 13px; height: 36px; }

.lab { font-size: 23px; color: #63696b; flex: none; }
.lx { width: 31px; }
.ly { width: 32px; margin-left: 19px; }
.lw { width: 38px; margin-left: 19px; }
.lh { width: 31px; }
.spin { display: flex; height: 53px; background: #fff; border: 2px solid #cdcdcb; border-radius: 8px; flex: none; align-items: stretch; font-size: 23px; overflow: hidden; }
.s151 { width: 151px; }
.s150 { width: 150px; }
.s149 { width: 149px; }
.val { flex: 1; display: flex; align-items: center; padding-left: 17px; white-space: nowrap; min-width: 0; }
.step { width: 24px; flex: none; display: flex; flex-direction: column; border-left: 1px solid #e2e2e2; }
.step .up, .step .dn { flex: 1; position: relative; }
.step .up { border-bottom: 1px solid #e2e2e2; }
.step .up::after, .step .dn::after { content: ""; position: absolute; left: 4px; top: 7px; border-left: 7px solid transparent; border-right: 7px solid transparent; }
.step .up::after { border-bottom: 9px solid #2e3436; }
.step .dn::after { border-top: 9px solid #2e3436; }
.step .up.off::after { border-bottom-color: #a3a5a5; }
.lockslot { width: 76px; flex: none; display: flex; justify-content: center; padding-right: 12px; }
.lockic { width: 22px; height: 32px; }
.unit { width: 84px; height: 43px; margin-left: 7px; flex: none; display: flex; align-items: center; gap: 8px; padding-left: 9px; font-size: 23px; color: #3a3f41; background: linear-gradient(#ececeb, #cfcfce); border: 2px solid #b2b2b0; border-radius: 7px; }
.caret { width: 0; height: 0; border-left: 9px solid transparent; border-right: 9px solid transparent; border-top: 11px solid #3a4245; }
.toggle { width: 50px; height: 55px; margin-left: 6px; flex: none; display: flex; align-items: center; justify-content: center; background: #dcdcdb; border: 2px solid #c2c2c0; border-radius: 8px; }
.toggle.first { margin-left: 0; }
.mic { width: 24px; height: 32px; }

/* tooltip */
.tooltip { position: absolute; left: 88px; top: 120px; width: 478px; height: 82px; background: #353535; border-radius: 7px; color: #e8e8e8; font-size: 25.800px; display: flex; align-items: center; padding-left: 26px; white-space: nowrap; z-index: 5; }

/* main */
.main { flex: none; height: 1096px; display: flex; }
.toolbox { width: 64px; flex: none; display: flex; flex-direction: column; padding-top: 2px; }
.tool { height: 64px; flex: none; display: flex; align-items: center; justify-content: center; }
.tool.active { width: 60px; height: 60px; margin: 2px 0 2px 4px; background: #dbdbda; border: 2px solid #c4c4c2; border-radius: 8px; }
.tool.active .tic { margin-left: -4px; }
.tic { width: 48px; height: 44px; overflow: visible; }
.biga { font-family: "DejaVu Sans", sans-serif; font-weight: 700; font-size: 50px; fill: #111; }
.more { height: 40px; display: flex; align-items: center; justify-content: center; margin-top: -4px; }
.arrow-r { width: 0; height: 0; border-top: 11px solid transparent; border-bottom: 11px solid transparent; border-left: 10px solid #2f3a3e; }

.workspace { width: 2404px; flex: none; display: grid; grid-template-columns: 48px 2312px 4px 26px 14px; grid-template-rows: 30px 1030px 4px 26px; }
.corner { grid-column: 1; grid-row: 1; display: flex; justify-content: center; padding: 0 0 0 14px; }
.cornerlock { width: 22px; height: 24px; }
.hruler { grid-column: 2 / 3; grid-row: 1; position: relative; display: flex; overflow: hidden; padding-left: 29px; border-bottom: 2px solid #353b3e;
  background-image: linear-gradient(90deg, #444 0 2px, transparent 2px), linear-gradient(90deg, #444 0 2px, transparent 2px);
  background-size: 32.54px 14px, 32.54px 8px;
  background-position: 28.9px 100%, 12.63px 100%;
  background-repeat: repeat-x; }
.hcell { flex: 0 0 162.7px; height: 28px; border-left: 2px solid #444; padding-left: 3px; }
.hcell b, .vcell b { font-weight: 400; font-size: 14px; color: #666a6b; }
.hcell b { display: block; line-height: 14px; margin-top: 3px; }
.hmark { position: absolute; left: 115px; top: 17px; border-left: 10px solid transparent; border-right: 10px solid transparent; border-top: 11px solid #2f3538; }
.zoomfit { grid-column: 4; grid-row: 1; padding-top: 2px; }
.fitic { width: 24px; height: 24px; display: block; margin-left: 3px; }
.vruler { grid-column: 1; grid-row: 2 / 3; position: relative; overflow: hidden; border-right: 2px solid #353b3e; margin-left: 16px; padding-top: 0;
  background-image: linear-gradient(#444 0 2px, transparent 2px), linear-gradient(#444 0 2px, transparent 2px);
  background-size: 14px 32.54px, 8px 32.54px;
  background-position: 100% 7.46px, 100% 23.73px;
  background-repeat: repeat-y; height: 1028px; }
.vcell { display: block; height: 162.7px; width: 30px; border-top: 2px solid #444; margin-top: 0; }
.vcell:first-child { margin-top: -122.700px; }
.vcell b { display: block; width: 9px; line-height: 16.500px; word-break: break-all; padding-top: 6px; }
.vmark { position: absolute; right: 0; top: 0; border-top: 8px solid #333; border-left: 9px solid transparent; }
.canvas { grid-column: 2; grid-row: 2; background: #fff; overflow: hidden; }
.art { display: block; width: 2312px; height: 1030px; }
.vscroll { grid-column: 4; grid-row: 2; background: #c2c4c3; border-left: 2px solid #aeb0af; position: relative; padding-top: 401px; padding-left: 6px; }
.vthumb { width: 12px; height: 163px; border-radius: 6px; background: #777a7a; }
.hscroll { grid-column: 2; grid-row: 4; background: #c2c4c3; border-top: 2px solid #aeb0af; padding-top: 6px; padding-left: 518px; }
.hthumb { width: 1195px; height: 12px; border-radius: 6px; background: #777a7a; }
.cms { grid-column: 3 / 5; grid-row: 3 / 5; padding: 2px 0 0 6px; }
.cmsic { width: 24px; height: 26px; display: block; }

.snapbar { width: 86px; flex: none; border-left: 2px solid #bdbdbb; height: 1096px; padding-top: 1px; display: flex; flex-direction: column; align-items: center; position: relative; left: 0; }
.snap { width: 52px; height: 56px; flex: none; display: flex; align-items: center; justify-content: center; margin-left: 12px; }
.snap.on { height: 52px; margin-top: 2px; margin-bottom: 2px; background: #dcdcdb; border: 2px solid #c2c2c0; border-radius: 8px; }
.sic { width: 36px; height: 36px; overflow: visible; }
.snapa { font-family: "DejaVu Sans", sans-serif; font-weight: 700; font-size: 34px; fill: #111; }
.hsep { width: 32px; height: 2px; margin: 11px 0 11px 4px; background: #cfcfcd; flex: none; }
.more.end { margin-top: 30px; margin-left: 4px; }

/* palette */
.palette { flex: none; height: 26px; margin-top: 2px; display: flex; }
.none { width: 22px; height: 26px; background: #fff; flex: none; }
.noneic { width: 22px; height: 26px; display: block; }
.swatches { width: 2506px; display: flex; overflow: hidden; flex: none; }
.swatches i { flex: 0 0 26px; height: 26px; }
.arrow-l { width: 0; height: 0; margin: 2px 0 0 9px; border-top: 11px solid transparent; border-bottom: 11px solid transparent; border-right: 10px solid #2f3a3e; }
.palscroll { flex: none; width: 2530px; height: 26px; margin-top: 4px; background: #c2c4c3; border-top: 2px solid #aeb0af; padding-top: 6px; }
.palthumb { width: 558px; height: 12px; border-radius: 6px; background: #777a7a; }

/* status */
.status { flex: none; height: 58px; display: flex; align-items: flex-start; background: linear-gradient(#e8e8e7, #dededd); font-size: 23px; padding-top: 4px; }
.style { width: 240px; flex: none; display: grid; grid-template-columns: 74px 166px; grid-template-rows: 28px 26px; font-size: 21px; }
.slab { line-height: 28px; white-space: nowrap; color: #2e3436; }
.fillsw { background: #008000; }
.strokerow { display: flex; align-items: center; }
.strokesw { width: 86px; height: 26px; background: #000; }
.sw { margin-left: 7px; font-size: 23px; color: #555a5c; }
.lo { width: 27px; margin: 9px 0 0 10px; }
.opac { width: 90px; height: 56px; margin-top: 2px; border-color: #bfbfbd; }
.opac .val { padding-left: 18px; }
.opac .step { width: 24px; }
.vsep { width: 2px; height: 54px; background: #cfcfcd; margin-left: 8px; flex: none; }
.eye { width: 24px; height: 24px; margin: 17px 0 0 18px; flex: none; }
.padlock { width: 22px; height: 32px; margin: 13px 0 0 33px; flex: none; }
.layerbtn { width: 164px; height: 58px; margin: 2px 0 0 20px; flex: none; display: flex; align-items: center; justify-content: space-between; padding: 0 18px 6px 18px; background: linear-gradient(#ececeb, #d6d6d5); border: 2px solid #bcbcba; border-radius: 8px; }
.caret.big { border-left-width: 10px; border-right-width: 10px; border-top-width: 11px; }
.msg { margin: 12px 0 0 3px; white-space: pre; font-size: 25.900px; line-height: 30px; flex: none; width: 1625px; }
.msg b { font-weight: 700; }
.vsep.right { margin-left: 0; }
.coords { width: 125px; flex: none; display: grid; grid-template-columns: 38px 1fr; grid-template-rows: 26px 28px; font-size: 23px; line-height: 26px; padding-left: 4px; color: #555a5c; }
.num { white-space: nowrap; }
.lz { width: 26px; margin-top: 9px; }
.zoomsp { width: 111px; height: 56px; margin-top: 2px; position: relative; }
.zoomsp .val { padding-left: 33px; }
.zoomsp .step { width: 26px; height: 24px; border-bottom: 1px solid #ddd; }
.zoomsp .up { border-bottom: 0; }
.grip { position: absolute; right: 0; bottom: 0; width: 28px; height: 26px; background: #f4f4f4; border-left: 1px solid #ccc; border-top: 1px solid #ccc; }
```
